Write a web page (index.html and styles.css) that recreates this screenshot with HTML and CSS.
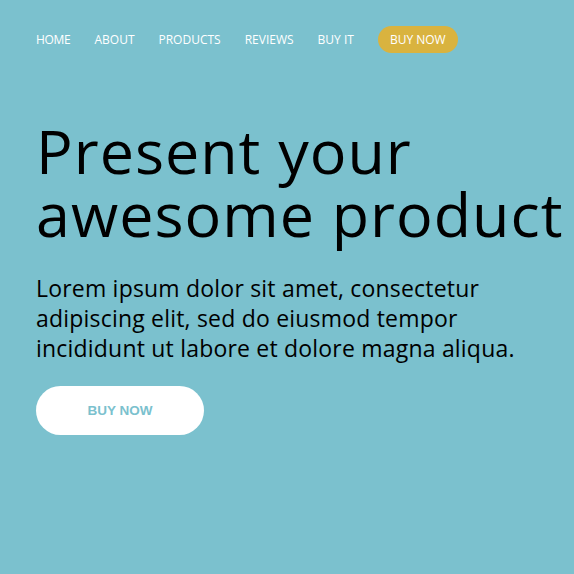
FILE: index.html
```html
<!DOCTYPE html>
<html lang="en">
<head>
<meta charset="utf-8">
<title>Product</title>
<link rel="stylesheet" href="styles.css">
</head>
<body>
<div class="page">
  <nav class="nav">
    <a class="nav-link" href="#">HOME</a>
    <a class="nav-link" href="#">ABOUT</a>
    <a class="nav-link" href="#">PRODUCTS</a>
    <a class="nav-link" href="#">REVIEWS</a>
    <a class="nav-link" href="#">BUY IT</a>
    <a class="nav-link nav-cta" href="#">BUY NOW</a>
  </nav>
  <section class="hero">
    <h1 class="hero-title">Present your<br>awesome product</h1>
    <p class="hero-text">Lorem ipsum dolor sit amet, consectetur adipiscing elit, sed do eiusmod tempor incididunt ut labore et dolore magna aliqua.</p>
    <a class="hero-btn" href="#">BUY NOW</a>
  </section>
</div>
</body>
</html>
```
FILE: styles.css
```css
html, body {
  margin: 0;
  padding: 0;
  height: 100%;
}
body {
  background: #7bc1ce;
  font-family: "Open Sans", "Lato", sans-serif;
  color: #000;
  overflow: hidden;
}
.page {
  padding: 26px 36px 0 36px;
}
.nav {
  display: flex;
  align-items: center;
  gap: 24px;
  height: 27px;
}
.nav-link {
  color: #fff;
  text-decoration: none;
  font-size: 12px;
  line-height: 27px;
}
.nav-link:first-child {
  letter-spacing: -0.3px;
}
.nav-cta {
  background: #d9b33f;
  border-radius: 14px;
  padding: 0 12px;
  height: 27px;
}
.hero {
  padding-top: 66px;
}
.hero-title {
  margin: 0;
  font-weight: 400;
  font-size: 61px;
  line-height: 63px;
  letter-spacing: 1px;
  white-space: nowrap;
}
.hero-text {
  margin: 28px 0 0 0;
  font-size: 23px;
  line-height: 30px;
  letter-spacing: 0.2px;
  max-width: 500px;
}
.hero-btn {
  display: flex;
  align-items: center;
  justify-content: center;
  margin-top: 23px;
  width: 168px;
  height: 49px;
  border-radius: 25px;
  background: #fff;
  color: #7bc1ce;
  font-family: "Liberation Sans", Arial, sans-serif;
  font-weight: 700;
  font-size: 13.5px;
  text-decoration: none;
}
```
